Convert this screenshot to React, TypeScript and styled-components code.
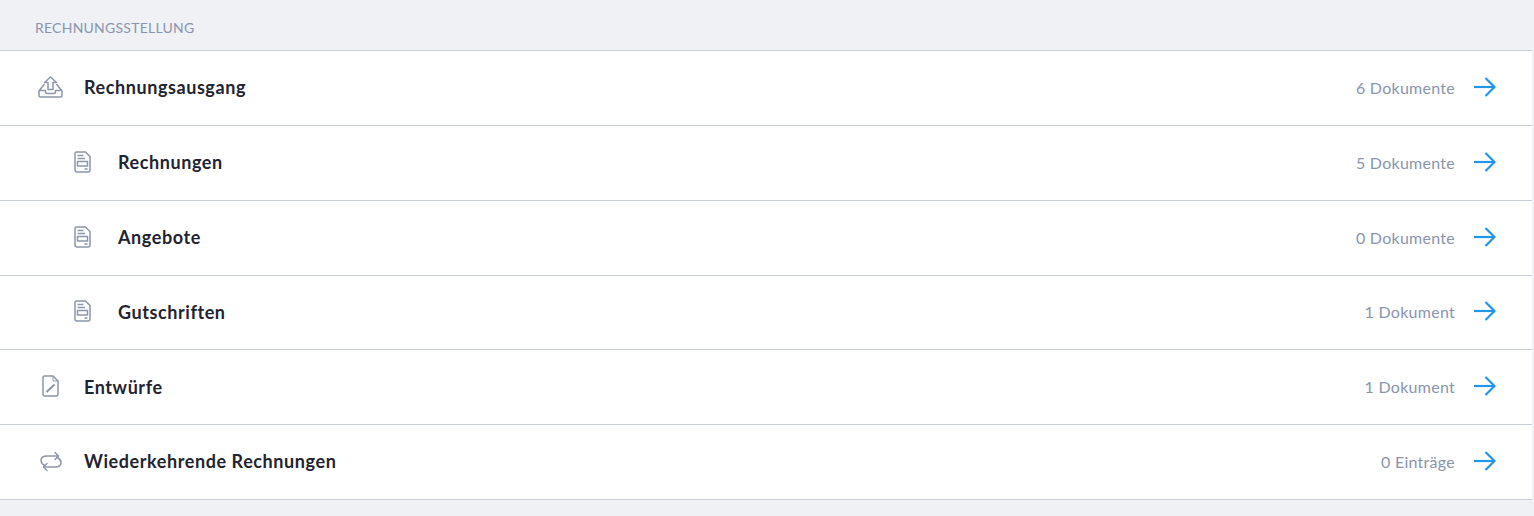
import styled, { createGlobalStyle } from 'styled-components';

const GlobalStyle = createGlobalStyle`
    html, body {
        margin: 0;
        padding: 0;
        background: #eff1f5;
        font-family: Lato, "Open Sans", sans-serif;
    }
`

const OutboxIcon = () => (
    <svg width="25" height="22" viewBox="0 0 25 22" fill="none" stroke="#8d96a8" strokeWidth="1.5" strokeLinejoin="round">
        <path d="M12.5 1 L18.5 6.5 H15 V13.5 H10 V6.5 H6.5 Z" />
        <path d="M6.5 8 L1 15 V19.5 a1.5 1.5 0 0 0 1.5 1.5 H22.5 a1.5 1.5 0 0 0 1.5 -1.5 V15 L18.5 8" />
        <path d="M1 14.5 H7.5 V16 a1.5 1.5 0 0 0 1.5 1.5 H16 a1.5 1.5 0 0 0 1.5 -1.5 V14.5 H24" />
    </svg>
)

const InvoiceIcon = () => (
    <svg width="17" height="22" viewBox="0 0 17 22" fill="none" stroke="#8d96a8" strokeWidth="1.5" strokeLinejoin="round">
        <path d="M2.5 1 H11.5 L16 5.5 V19 a2 2 0 0 1 -2 2 H3 a2 2 0 0 1 -2 -2 V2.5 a1.5 1.5 0 0 1 1.5 -1.5 Z" />
        <path d="M3.5 4.5 H9.5 M3.5 7.5 H11" />
        <rect x="3.5" y="10.5" width="10" height="4.5" />
        <path d="M10.5 18 H13.5" />
    </svg>
)

const DraftIcon = () => (
    <svg width="17" height="22" viewBox="0 0 17 22" fill="none" stroke="#8d96a8" strokeWidth="1.5" strokeLinejoin="round">
        <path d="M2.5 1 H11 L16 6 V19 a2 2 0 0 1 -2 2 H3 a2 2 0 0 1 -2 -2 V2.5 a1.5 1.5 0 0 1 1.5 -1.5 Z" />
        <path d="M11 1 V6 H16" strokeWidth="1" />
        <path d="M4.5 17 L12.5 9.5" strokeWidth="2" />
    </svg>
)

const RepeatIcon = () => (
    <svg width="22" height="21" viewBox="0 0 22 21" fill="none" stroke="#8d96a8" strokeWidth="1.5" strokeLinecap="round" strokeLinejoin="round">
        <path d="M4.5 14.5 C2 13 1 11.5 1 9.5 C1 6.5 3.5 5 7 5 H18" />
        <path d="M15 1.5 L18.5 5 L15 8.5" />
        <path d="M17.5 6.5 C20 8 21 9.5 21 11.5 C21 14.5 18.5 16 15 16 H4" />
        <path d="M7 12.5 L3.5 16 L7 19.5" />
    </svg>
)

const ArrowIcon = () => (
    <svg width="22" height="20" viewBox="0 0 22 20" fill="none" stroke="#2196e8" strokeWidth="2.2">
        <path d="M0 10 H20.5" />
        <path d="M11.5 1 L20.5 10 L11.5 19" />
    </svg>
)

const rows = [
    { title: 'Rechnungsausgang', count: '6 Dokumente', icon: <OutboxIcon />, nested: false },
    { title: 'Rechnungen', count: '5 Dokumente', icon: <InvoiceIcon />, nested: true },
    { title: 'Angebote', count: '0 Dokumente', icon: <InvoiceIcon />, nested: true },
    { title: 'Gutschriften', count: '1 Dokument', icon: <InvoiceIcon />, nested: true },
    { title: 'Entwürfe', count: '1 Dokument', icon: <DraftIcon />, nested: false },
    { title: 'Wiederkehrende Rechnungen', count: '0 Einträge', icon: <RepeatIcon />, nested: false },
]

export default function App() {
    return (
        <Page>
            <GlobalStyle />
            <SectionTitle>Rechnungsstellung</SectionTitle>
            <List>
                {rows.map((row) => (
                    <Row key={row.title}>
                        <IconSlot $nested={row.nested}>{row.icon}</IconSlot>
                        <Title>{row.title}</Title>
                        <Count>{row.count}</Count>
                        <ArrowSlot>
                            <ArrowIcon />
                        </ArrowSlot>
                    </Row>
                ))}
            </List>
        </Page>
    );
}

const Page = styled.div`
    width: 1534px;
    height: 516px;
    overflow: hidden;
    background: #eff1f5;
`

const SectionTitle = styled.div`
    height: 50px;
    box-sizing: border-box;
    padding: 19px 0 0 35px;
    font-size: 14px;
    line-height: 17px;
    letter-spacing: 0.24px;
    text-transform: uppercase;
    color: #8a94ad;
`

const List = styled.div`
    width: 1532px;
    background: #fff;
    border-top: 1px solid #c9ced8;
`

const Row = styled.div`
    height: 74.85px;
    box-sizing: border-box;
    display: flex;
    align-items: center;
    padding-right: 36px;
    padding-bottom: 2px;
    border-bottom: 1px solid #c9ced8;
`

const IconSlot = styled.div<{ $nested: boolean }>`
    display: flex;
    align-items: center;
    justify-content: center;
    width: 29px;
    margin-left: ${(p) => (p.$nested ? '68px' : '36px')};
    margin-right: ${(p) => (p.$nested ? '21px' : '19px')};
`

const Title = styled.div`
    flex: 1;
    padding-top: 0.5px;
    font-size: 18px;
    font-weight: 700;
    letter-spacing: 0.58px;
    color: #1f2430;
`

const Count = styled.div`
    padding-top: 1px;
    font-size: 16px;
    letter-spacing: 0.27px;
    color: #8a94ad;
`

const ArrowSlot = styled.div`
    display: flex;
    margin-left: 19px;
`
